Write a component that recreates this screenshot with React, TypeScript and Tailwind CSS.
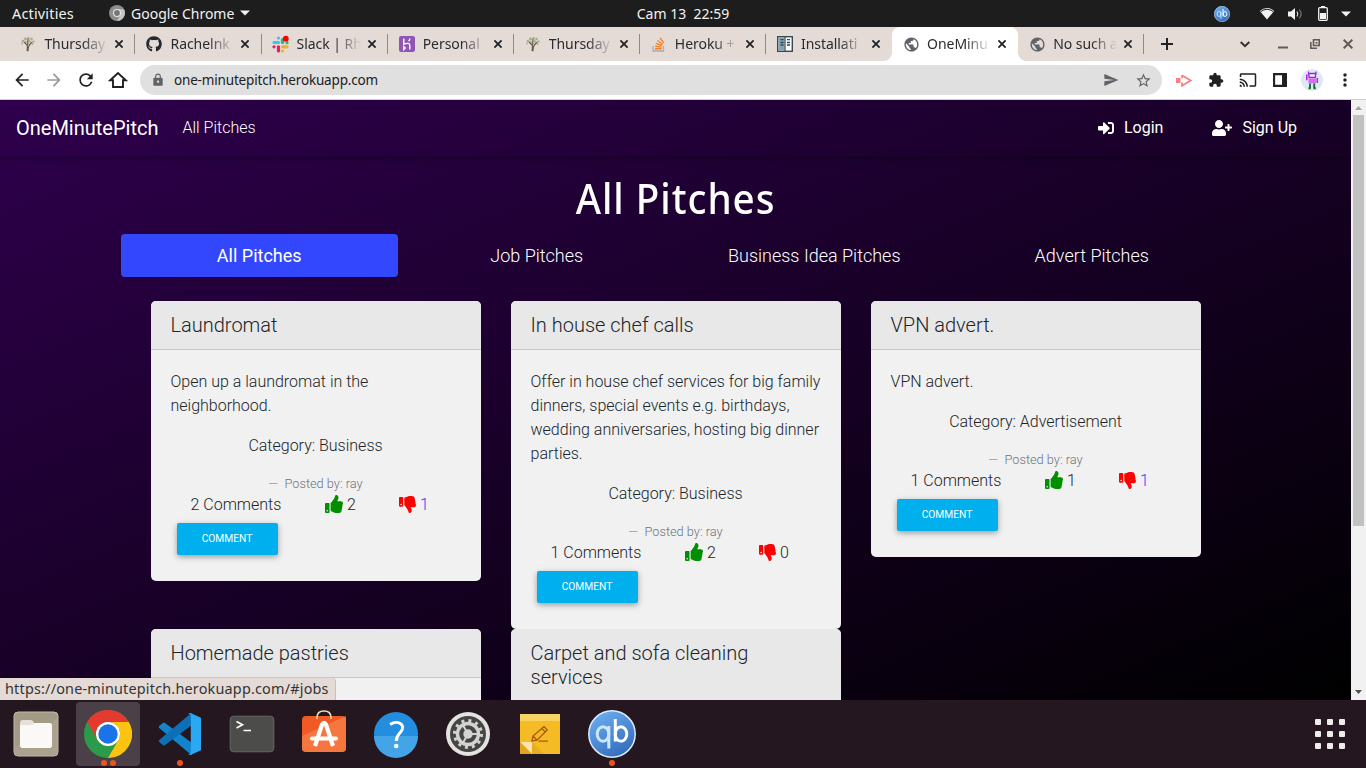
import React from "react";
import { FaSignInAlt, FaUserPlus, FaThumbsUp, FaThumbsDown, FaGithub } from "react-icons/fa";
import {
  MdPublic, MdLock, MdSend, MdStarBorder, MdExtension, MdCast, MdMoreVert,
  MdArrowBack, MdArrowForward, MdRefresh, MdAdd, MdKeyboardArrowDown,
} from "react-icons/md";

const Tree = () => (
  <svg viewBox="0 0 16 16" className="size-4">
    <path d="M7 15c.5-2 .6-4 .2-6L4 6M8 15.2c-.2-3 .3-6 4-9M7.7 9 8 3" stroke="#655a42" strokeWidth="1.2" fill="none" />
    <g fill="#8b9a68" opacity=".7">
      <circle cx="3" cy="5" r="1.3" /><circle cx="5.5" cy="3" r="1.4" /><circle cx="8.5" cy="2.2" r="1.3" />
      <circle cx="11.5" cy="3" r="1.3" /><circle cx="13.4" cy="5.6" r="1.2" /><circle cx="5.8" cy="6" r="1.1" />
      <circle cx="9.8" cy="5.4" r="1.2" /><circle cx="2" cy="7.5" r=".9" /><circle cx="12.5" cy="8" r=".9" />
    </g>
  </svg>
);

const Slack = () => (
  <svg viewBox="0 0 17 17" className="size-[17px] overflow-visible">
    <g strokeWidth="3.2" strokeLinecap="round" fill="none">
      <path d="M6.5 2v0M2 6.5h4.5" stroke="#36c5f0" />
      <path d="M10.5 3.5v3M15 6.7v0" stroke="#2eb67d" />
      <path d="M10.5 15v0M10.7 10.8H15" stroke="#ecb22e" />
      <path d="M6.5 10.8V15M2 10.8v0" stroke="#e01e5a" />
    </g>
    <circle cx="13.8" cy="2.7" r="2.9" fill="#f00" />
  </svg>
);

const Heroku = () => (
  <svg viewBox="0 0 16 16" className="size-4">
    <rect width="16" height="16" rx="2" fill="#8f56b5" />
    <path d="M4.8 2.5v5.7c3-1.2 6-1.3 6 1v4.3M10.8 2.5c0 1.2-.4 2-1.2 2.8M4.8 10.6v3l1.5-1.5z" stroke="#fff" strokeWidth="1.4" fill="none" />
  </svg>
);

const StackOverflow = () => (
  <svg viewBox="0 0 16 16" className="size-4">
    <path d="M2 10v5h10.5v-5" stroke="#a9adb1" strokeWidth="1.3" fill="none" />
    <path d="M4 12.7h6.7M4.1 10.3l6.6.8M4.9 7.4l6.1 2.1M6.5 4.5l5.2 3.8M9 1.8l3.8 5" stroke="#f48024" strokeWidth="1.4" />
  </svg>
);

const Book = () => (
  <svg viewBox="0 0 16 16" className="size-4">
    <rect x=".7" y=".7" width="14.6" height="14.6" fill="#fff" stroke="#37474f" strokeWidth="1.4" />
    <path d="M1.4 1.4h6v13.2h-6z" fill="#82a4b8" />
    <path d="M8 1v14" stroke="#37474f" strokeWidth="1.2" />
    <path d="M3.5 3.7h3M3.5 6.5h3M3.5 9h3M10 3.7h3M10 6.5h3M10 9h3" stroke="#37474f" strokeWidth="1.3" />
  </svg>
);

const Globe = () => <MdPublic className="size-[17px] text-[#5f6368]" />;

type TabInfo = { icon: React.ReactNode; label: string; active?: boolean; line?: boolean };
const tabs: TabInfo[] = [
  { icon: <Tree />, label: "Thursday", line: true },
  { icon: <FaGithub className="size-4 text-[#24292f]" />, label: "Rachelnk", line: true },
  { icon: <Slack />, label: "Slack | Rh", line: true },
  { icon: <Heroku />, label: "Personal", line: true },
  { icon: <Tree />, label: "Thursday", line: true },
  { icon: <StackOverflow />, label: "Heroku +", line: true },
  { icon: <Book />, label: "Installati" },
  { icon: <Globe />, label: "OneMinu", active: true },
  { icon: <Globe />, label: "No such a", line: true },
];

function Tab({ icon, label, active, line }: TabInfo) {
  return (
    <div className={`relative flex h-[34px] w-[126.1px] shrink-0 items-center pl-[10.5px] ${active ? "rounded-t-lg bg-white" : ""}`}>
      {active && (
        <>
          <span className="absolute bottom-0 -left-2 size-2 bg-[radial-gradient(circle_at_0_0,transparent_7.5px,#fff_8px)]" />
          <span className="absolute right-[-8px] bottom-0 size-2 bg-[radial-gradient(circle_at_100%_0,transparent_7.5px,#fff_8px)]" />
        </>
      )}
      <span className="flex w-[17px] shrink-0 justify-center">{icon}</span>
      <span className="ml-[7.5px] w-[64px] text-[14px] leading-5 tracking-[-0.05px] whitespace-nowrap text-[#2b2b2e] [mask-image:linear-gradient(90deg,#000_60%,transparent_100%)]">
        {label}
      </span>
      <svg viewBox="0 0 8 8" className="ml-[7px] size-2 shrink-0"><path d="m.4.4 7.2 7.2m0-7.2L.4 7.6" stroke="#202124" strokeWidth="1.8" /></svg>
      {line && <span className="ml-auto h-5 w-px bg-[#8f8987]" />}
    </div>
  );
}

const QB = ({ className }: { className: string }) => (
  <svg viewBox="0 0 48 48" className={className}>
    <defs>
      <linearGradient id="qb" x1="0" y1="0" x2=".6" y2="1">
        <stop stopColor="#72b4f5" /><stop offset="1" stopColor="#356ebf" />
      </linearGradient>
    </defs>
    <circle cx="24" cy="24" r="23.2" fill="url(#qb)" stroke="#dcebfb" strokeWidth="1.5" />
    <g fill="none" strokeWidth="3">
      <path d="M20.8 16v22.5" stroke="#c8e8ff" />
      <ellipse cx="15" cy="24" rx="5.8" ry="7.2" stroke="#c8e8ff" />
      <path d="M27.3 9v22.5" stroke="#fff" />
      <ellipse cx="33" cy="24" rx="5.8" ry="7.2" stroke="#fff" />
    </g>
  </svg>
);

function TopBar() {
  return (
    <div className="grid h-[27px] grid-cols-3 items-center bg-[#1d1d1d] text-[14px] text-[#f2f2f2]">
      <div className="flex items-center pl-3">
        <span className="w-[63px] text-[14.4px] tracking-[0.2px]">Activities</span>
        <svg viewBox="0 0 16 16" className="ml-[34px] size-4">
          <circle cx="8" cy="8" r="8" fill="#8d8d8d" />
          <path d="M8 4.3h7A8 8 0 0 1 8 16l3.3-6z" fill="#c5c5c5" />
          <circle cx="8" cy="8" r="4" fill="#e6e6e6" /><circle cx="8" cy="8" r="2.9" fill="#777" />
        </svg>
        <span className="ml-[6px] w-[104px] whitespace-nowrap">Google Chrome</span>
        <svg viewBox="0 0 10 6" className="ml-[5px] h-[6px] w-[10px]"><path d="M0 .5h10L5 5.5z" fill="#f2f2f2" /></svg>
      </div>
      <div className="pb-px text-center whitespace-pre">Cam 13  22:59</div>
      <div className="flex items-center justify-end pr-[15px]">
        <QB className="size-4" />
        <svg viewBox="0 0 16 13" className="ml-[29px] h-[13px] w-4">
          <path d="M8 12.5.8 4Q8-2 15.2 4z" fill="#f2f2f2" />
          <path d="M1.6 4.7Q8-.2 14.4 4.7" fill="none" stroke="#1d1d1d" strokeWidth="1" />
        </svg>
        <svg viewBox="0 0 15 14" className="ml-[13px] h-[14px] w-[15px]">
          <path d="M0 4.5h3L7 1v12L3 9.5H0z" fill="#f2f2f2" />
          <path d="M9 4.5q1.6 2.5 0 5" stroke="#ddd" strokeWidth="1.2" fill="none" />
          <path d="M11.3 2.5q3.6 4.5 0 9" stroke="#777" strokeWidth="1.2" fill="none" />
        </svg>
        <svg viewBox="0 0 10 15" className="ml-[15px] h-[15px] w-[10px]">
          <rect x=".7" y="1.7" width="8.6" height="12.6" rx="1" fill="none" stroke="#f2f2f2" strokeWidth="1.3" />
          <path d="M3 0h4v1.5H3zM2 7h6v6H2z" fill="#f2f2f2" />
        </svg>
        <svg viewBox="0 0 10 6" className="ml-[13px] h-[6px] w-[10px]"><path d="M0 .5h10L5 5.5z" fill="#f2f2f2" /></svg>
      </div>
    </div>
  );
}

function TabStrip() {
  return (
    <div className="flex h-[34px] items-center bg-[#e4dad6] pl-[9.4px]">
      {tabs.map((t, i) => <Tab key={i} {...t} />)}
      <svg viewBox="0 0 12 12" className="ml-[16.5px] size-3 shrink-0"><path d="M6 0v12M0 6h12" stroke="#202124" strokeWidth="2" /></svg>
      <svg viewBox="0 0 10 10" className="ml-auto size-[10px] shrink-0"><path d="m.7 3 4.3 4.2L9.3 3" fill="none" stroke="#303134" strokeWidth="2" /></svg>
      <svg viewBox="0 0 10 10" className="ml-[28px] size-[10px] shrink-0"><path d="M0 8.5h10" stroke="#5f5c5b" strokeWidth="2" /></svg>
      <svg viewBox="0 0 10 10" className="ml-[22px] size-[10px] shrink-0 overflow-visible">
        <path d="M3.5.8h5.7v5.7H3.5zM.8 3v6.2H7M5.5 3.8h2" stroke="#5f5c5b" strokeWidth="1.6" fill="none" />
      </svg>
      <svg viewBox="0 0 10 10" className="mr-[13px] ml-[23px] size-[10px] shrink-0"><path d="m.7.7 8.6 8.6m0-8.6L.7 9.3" stroke="#5f5c5b" strokeWidth="2" /></svg>
    </div>
  );
}

function Toolbar() {
  return (
    <div className="flex h-[39px] items-center border-b border-[#d0cfcf] bg-white text-[#202124]">
      <MdArrowBack className="ml-[12px] size-5" />
      <MdArrowForward className="ml-[12px] size-5 text-[#9a9a9a]" />
      <MdRefresh className="ml-[12px] size-5" />
      <svg viewBox="0 0 22 22" className="ml-[11px] size-[22px]">
        <path d="M3.2 11.2 11 4l7.8 7.2H16V18H6v-6.8z" fill="none" stroke="#202124" strokeWidth="1.9" />
      </svg>
      <div className="ml-[11px] flex h-[30px] w-[1022px] items-center rounded-full bg-[#e0e0e0] pr-[10px] pl-[11px]">
        <MdLock className="size-[14px] text-[#5f6368]" />
        <span className="ml-[9px] text-[13.5px] tracking-[-0.17px] whitespace-nowrap">one-minutepitch.herokuapp.com</span>
        <MdSend className="ml-auto size-4 text-[#5f6368]" />
        <MdStarBorder className="ml-[16px] size-[17px] text-[#5f6368]" />
      </div>
      <svg viewBox="0 0 16 13" className="ml-[14px] h-[13px] w-4">
        <path d="M0 4h4.5v5H0z" fill="#ff7d7d" />
        <path d="M6 1.3 14.7 6.5 6 11.7V8.5M6 1.3v3" stroke="#ff7d7d" strokeWidth="1.8" fill="none" />
      </svg>
      <MdExtension className="ml-4 size-4" />
      <MdCast className="ml-[15px] size-[18px]" />
      <svg viewBox="0 0 14 14" className="ml-4 size-[14px]"><path d="M1.1 1.1h11.8v11.8H1.1z" fill="none" stroke="#202124" strokeWidth="2.1" /><path d="M9 0h5v14H9z" fill="#202124" /></svg>
      <svg viewBox="0 0 22 22" className="ml-[14px] size-[22px]">
        <circle cx="11" cy="11" r="11" fill="#dfe9f5" />
        <path d="M7.5 2.5v3M15 2.5v3" stroke="#8a2be2" strokeWidth="1.2" />
        <path d="M8 4.5h6.5v4H8z" fill="#f6e8ff" stroke="#9a29d8" strokeWidth="1.3" />
        <path d="M7.5 9.5H15v4.8H7.5z" fill="#d86cf3" />
        <path d="M5.8 5.5v5.8M16.3 9v5" stroke="#ba27e8" strokeWidth="1.6" />
        <path d="M9 14.5v5M13.2 14.5v5M7.5 19.2h2.2M12.5 19.2h2.3" stroke="#176b2c" strokeWidth="1.9" />
      </svg>
      <MdMoreVert className="ml-[12px] size-5" />
    </div>
  );
}

type Pitch = { title: string; body: string; category?: string; comments?: number; up?: number; down?: number; voted?: boolean };
const columns: Pitch[][] = [
  [
    { title: "Laundromat", body: "Open up a laundromat in the neighborhood.", category: "Business", comments: 2, up: 2, down: 1, voted: true },
    { title: "Homemade pastries", body: "" },
  ],
  [
    { title: "In house chef calls", body: "Offer in house chef services for big family dinners, special events e.g. birthdays, wedding anniversaries, hosting big dinner parties.", category: "Business", comments: 1, up: 2, down: 0 },
    { title: "Carpet and sofa cleaning services", body: "" },
  ],
  [
    { title: "VPN advert.", body: "VPN advert.", category: "Advertisement", comments: 1, up: 1, down: 1, voted: true },
  ],
];
const rows = [0, 1].map((r) => columns.map((c) => c[r]).filter(Boolean));

function Card({ p }: { p: Pitch }) {
  return (
    <article className="w-[330px] overflow-hidden rounded-[5px] bg-[#f1f1f1] text-[#212529]">
      <h5 className="border-b border-[#c8c8c8] bg-[#e8e8e8] px-5 py-3 text-[20px] leading-6 font-light">{p.title}</h5>
      <div className="min-h-10 p-5">
        {p.category && (
          <>
            <p className="mb-4">{p.body}</p>
            <p className="mb-4 text-center">Category: {p.category}</p>
            <footer className="text-center text-[12.8px] leading-[19px] text-[#6c757d]">—&nbsp; Posted by: ray</footer>
            <div className="flex h-6 items-center pl-5">
              <span className="w-[134px]">{p.comments} Comments</span>
              <span className="flex w-[74.5px] items-center">
                <FaThumbsUp className="mr-[4.5px] mb-[3px] size-[18px] text-[#008f00]" />{p.up}
              </span>
              <FaThumbsDown className="mr-[4px] mb-[2px] size-[17px] text-[#f00]" />
              <span className={p.voted ? "text-[#3a3aff]" : ""}>{p.down}</span>
            </div>
            <button className="m-[6px] block h-8 w-[101px] rounded-[2px] bg-[#00b0ee] text-[10.24px] font-normal text-white shadow-[0_2px_5px_rgba(0,0,0,.25),0_2px_8px_rgba(0,0,0,.12)]">
              COMMENT
            </button>
          </>
        )}
      </div>
    </article>
  );
}

function Site() {
  return (
    <main className="relative h-[600px] w-[1351px] overflow-hidden bg-[linear-gradient(to_bottom_right,#2f004d,#000000)] font-[Roboto,sans-serif] text-base leading-6 font-light">
      <nav className="flex h-14 items-center px-4 text-white shadow-[0_2px_5px_rgba(0,0,0,.16),0_2px_10px_rgba(0,0,0,.12)]">
        <span className="text-[20px] font-normal">OneMinutePitch</span>
        <span className="ml-[24px]">All Pitches</span>
        <span className="ml-auto flex items-center font-normal"><FaSignInAlt className="mr-[10px] mb-px size-4" />Login</span>
        <span className="mr-[38px] ml-[49px] flex items-center font-normal"><FaUserPlus className="mr-[10px] mb-px h-4 w-5" />Sign Up</span>
      </nav>
      <h1 className="mt-[17px] flex h-[50px] items-center justify-center font-['Noto_Sans',sans-serif] text-[42px] leading-[50px] font-medium text-white">
        <span className="inline-block scale-x-[0.92] tracking-[1.05px]">All Pitches</span>
      </h1>
      <div className="mx-auto mt-[11px] grid h-[43px] w-[1110px] grid-cols-4 text-center text-[18px] leading-[43px] text-white">
        <span className="rounded bg-[#3347ff] font-normal">All Pitches</span>
        <span>Job Pitches</span>
        <span>Business Idea Pitches</span>
        <span>Advert Pitches</span>
      </div>
      <section className="mx-auto mt-6 w-[1050px]">
        {rows.map((r, i) => (
          <div key={i} className="flex items-start gap-[30px]">{r.map((p) => <Card key={p.title} p={p} />)}</div>
        ))}
      </section>
      <div className="absolute bottom-0 left-0 h-[22px] w-[336px] rounded-tr-[4px] border-r border-[#c9c0bc] bg-[#e4dad6] pl-[5px] font-['Noto_Sans',sans-serif] text-[14.4px] leading-[22px] font-normal tracking-[0.2px] whitespace-nowrap text-[#333]">
        https://one-minutepitch.herokuapp.com/#jobs
      </div>
    </main>
  );
}

function Scrollbar() {
  return (
    <div className="flex h-[600px] w-[15px] flex-col items-center bg-[#f1f1f1]">
      <svg viewBox="0 0 15 15" className="size-[15px]"><path d="M4 10 7.5 6 11 10z" fill="#a3a3a3" /></svg>
      <div className="h-[411px] w-[11px] bg-[#c1c1c1]" />
      <svg viewBox="0 0 15 15" className="mt-auto size-[15px]"><path d="M4 5 7.5 9 11 5z" fill="#505050" /></svg>
    </div>
  );
}

const Files = () => (
  <svg viewBox="0 0 48 48" className="size-12">
    <rect x="2" y="2" width="44" height="44" rx="4" fill="#a39b86" stroke="#c2bcab" />
    <path d="M2 38 46 8v34a4 4 0 0 1-4 4H6a4 4 0 0 1-4-4z" fill="#b2aa96" opacity=".5" />
    <path d="M8 13q0-3 3-3h8q2 0 3 3h15q3 0 3 3v19q0 3-3 3H11q-3 0-3-3z" fill="#e5e1d7" />
    <path d="M8 17q0-2 2-2h9q2 0 4-2h14q3 0 3 3v19q0 3-3 3H11q-3 0-3-3z" fill="#faf9f8" />
  </svg>
);
const Chrome = () => (
  <svg viewBox="0 0 48 48" className="size-12">
    <circle cx="24" cy="24" r="24" fill="#2c9a4b" />
    <path d="M3.2 12A24 24 0 0 1 44.8 12H24A12 12 0 0 0 13.6 30z" fill="#e53a30" />
    <path d="M44.8 12A24 24 0 0 1 24 48l10.4-18A12 12 0 0 0 24 12z" fill="#fcc411" />
    <circle cx="24" cy="24" r="12" fill="#fff" /><circle cx="24" cy="24" r="9.7" fill="#1a73e8" />
  </svg>
);
const Code = () => (
  <svg viewBox="0 0 48 48" className="size-12">
    <path d="m3.2 16 3.8-3.2q1-.6 2 .1L36 33v11.5q-1.5 0-3-1.5L3.2 18q-1-1 0-2z" fill="#1284cb" />
    <path d="m3.2 32 3.8 3.2q1 .6 2-.1L36 15V3.5q-1.5 0-3 1.5L3.2 30q-1 1 0 2z" fill="#0d70b7" />
    <path d="M34.5 3 45 7.8V40.2L34.5 45q-1.4 0-2.5-1.3 2.5 1 2.8-1.7V6q-.3-2.7-2.8-1.7Q33 3 34.5 3z" fill="#2aa8f2" />
  </svg>
);
const Terminal = () => (
  <svg viewBox="0 0 48 48" className="size-12">
    <rect x="2.2" y="6.2" width="43.6" height="35.6" rx="3.5" fill="#4c4c4b" stroke="#686866" />
    <path d="m8.5 11.5 6 3.3-6 3.3M15.5 20.5H23" stroke="#fff" strokeWidth="1.7" fill="none" />
  </svg>
);
const Software = () => (
  <svg viewBox="0 0 48 48" className="size-12 overflow-visible">
    <rect x="2" y="6" width="44" height="36" rx="4" fill="#f15a24" />
    <path d="M2 26 46 6v32a4 4 0 0 1-4 4H6a4 4 0 0 1-4-4z" fill="#f68048" opacity=".75" />
    <path d="M17 9V7.5q0-6.5 7-6.5t7 6.5V9" stroke="#f8dbab" strokeWidth="1.7" fill="none" />
    <path d="m15 36 7-21.5q2-3.5 4 0L33 36" stroke="#fff" strokeWidth="4.2" fill="none" />
    <path d="M12 28.5h24" stroke="#fff" strokeWidth="4.2" strokeLinecap="round" />
  </svg>
);
const Help = () => (
  <svg viewBox="0 0 48 48" className="size-12">
    <circle cx="24" cy="24" r="22" fill="#238de0" /><path d="M2 26h44A22 22 0 0 1 2 26z" fill="#43a4e8" />
    <path d="M18 14.5Q23.5 11 28 13.2q3.5 2.3 2.3 6C29 23.3 24.3 24 24.3 31" stroke="#fff" strokeWidth="2.9" fill="none" />
    <circle cx="24.2" cy="36" r="2.3" fill="#fff" />
  </svg>
);
const Settings = () => (
  <svg viewBox="0 0 48 48" className="size-12">
    <circle cx="24" cy="24" r="22" fill="#e3e3e2" /><circle cx="24" cy="24" r="18" fill="#464645" />
    <circle cx="24" cy="24" r="13.5" fill="none" stroke="#d4d4d3" strokeWidth="3" strokeDasharray="3 4.07" />
    <circle cx="24" cy="24" r="10.5" fill="none" stroke="#d4d4d3" strokeWidth="3.4" />
    <circle cx="24" cy="24" r="4.7" fill="#d4d4d3" />
    <path d="M24 24h10M24 24l-5-8.7M24 24l-5 8.7" stroke="#d4d4d3" strokeWidth="2" />
  </svg>
);
const Notes = () => (
  <svg viewBox="0 0 48 48" className="size-12">
    <path d="M4 4h40v40H4z" fill="#f4bb25" /><path d="M4 4h40v7H4z" fill="#f8d263" />
    <path d="M4 32h12v12z" fill="#fbe5af" /><path d="M16 32 28 44H16z" fill="#dea51c" opacity=".6" />
    <path d="m4 32 12 12H4z" fill="#e4a41c" />
    <path d="m16 31 1-5L28 16.7l3.2 3.2L21 30.2zM17 26l4 4M26 18.7l3.2 3.2M22.5 31.2H32" stroke="#a5590d" strokeWidth="1.3" fill="none" />
  </svg>
);

const dock = [
  { el: <Files />, dots: 0 }, { el: <Chrome />, dots: 2, active: true }, { el: <Code />, dots: 1 },
  { el: <Terminal />, dots: 0 }, { el: <Software />, dots: 0 }, { el: <Help />, dots: 0 },
  { el: <Settings />, dots: 0 }, { el: <Notes />, dots: 0 }, { el: <QB className="size-12" />, dots: 1 },
];

function Dock() {
  return (
    <div className="flex h-[68px] items-center gap-2 bg-[#241720] px-1">
      {dock.map((d, i) => (
        <div key={i} className={`relative flex size-16 items-center justify-center rounded ${d.active ? "bg-[#4b4048]" : ""}`}>
          {d.el}
          <span className="absolute inset-x-0 bottom-0 flex justify-center gap-[3px]">
            {Array.from({ length: d.dots }, (_, k) => <i key={k} className="size-[6px] rounded-full bg-[#e95420]" />)}
          </span>
        </div>
      ))}
      <div className="mr-[17px] ml-auto grid grid-cols-3 gap-[6px]">
        {Array.from({ length: 9 }, (_, i) => <i key={i} className="size-[6px] rounded-[1px] bg-[#eeecea]" />)}
      </div>
    </div>
  );
}

export default function App() {
  return (
    <div className="h-[768px] w-[1366px] overflow-hidden font-['Noto_Sans',sans-serif]">
      <TopBar />
      <TabStrip />
      <Toolbar />
      <div className="flex">
        <Site />
        <Scrollbar />
      </div>
      <Dock />
    </div>
  );
}
